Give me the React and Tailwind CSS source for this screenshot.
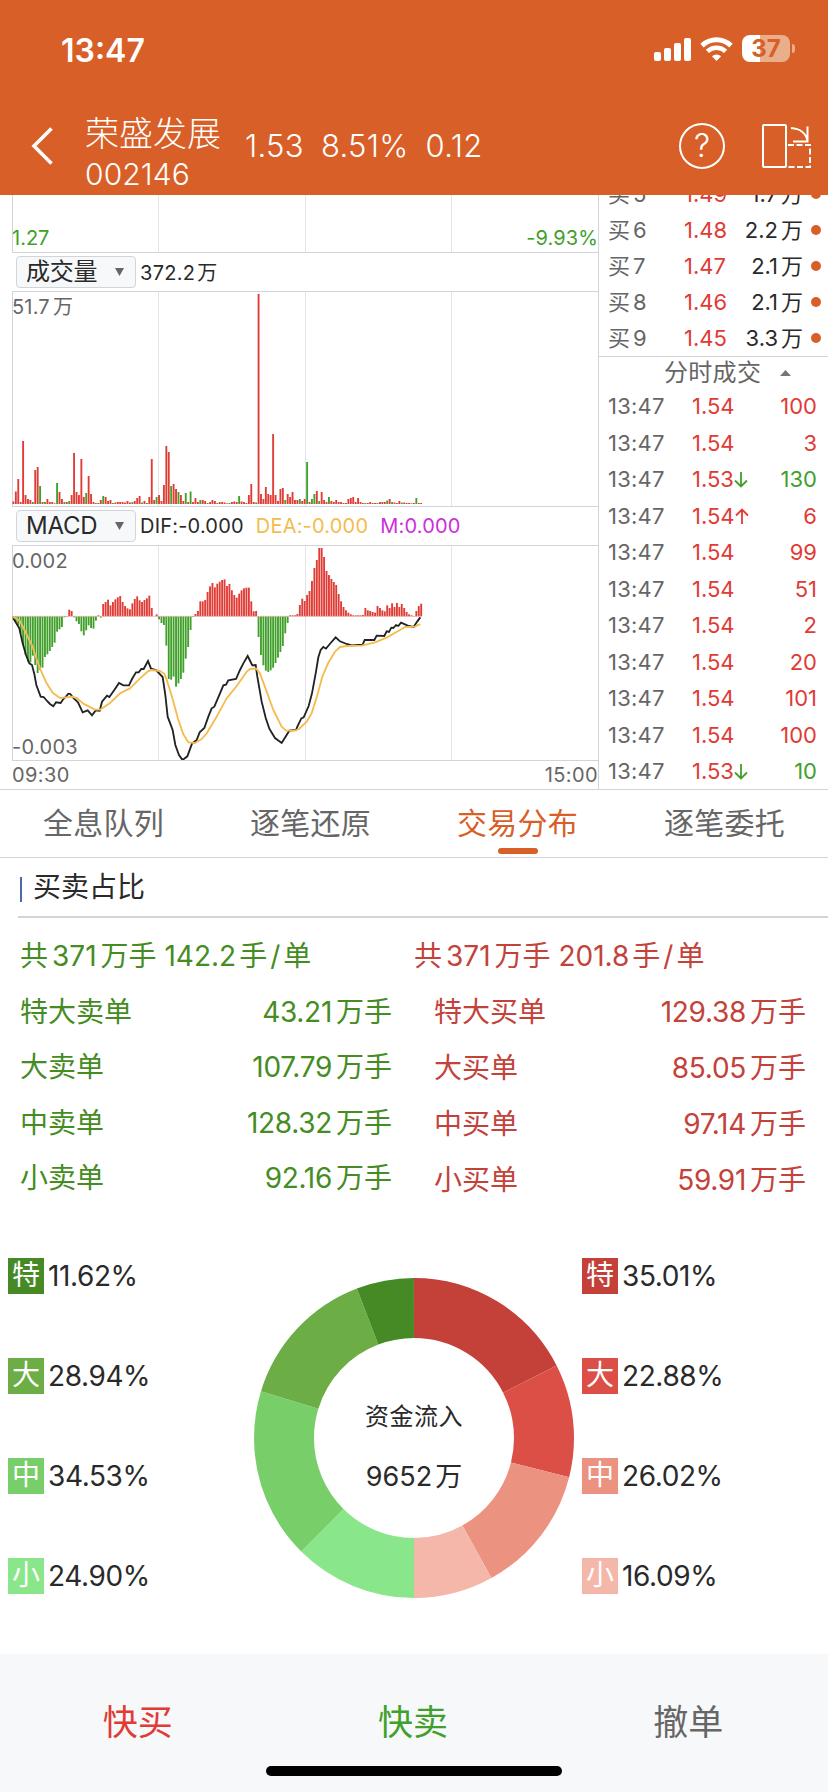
import React from "react";

const volume = [
  2.5, 12.5, 25, 2, 63, 9, 5, 4, -2, 34, 37, -18, 2, -2, 5, 2, 2, 0.7, -21, 12,
  5, -2, 2, -3, 9, 51, 12, 9, 45, 7, -11, 28, 10, 2, -1, 1, 4, -8, 7, 3,
  4, -1, 1.5, 2, 2, 2, 1.5, 3, 1.5, -2, 3, 6, 8, -1.5, 3, -1, 7, 45, 4, -7,
  9, 3, 19, 58, 52, -18, 20, 15, -12, 9, 3, -11, 2, -12.5, 2, 6, 2, -4, 4, 3,
  -1, 2, 4, 3, -1, 2, 2, 1.5, 0.7, -1, 2, 2.5, 2, -8, 2.5, 2, 1, 9, 20, 2,
  -1.5, 210, 10, 5, 17, 10, 9, 70, 9, 3, 15, 16, -4, 10, 7, 12, 4, 4, -5, 3,
  5, -42, 2, -5, -10, 13, -3, 12, 4, 2, -7, 3, 2, 4, 2, 2, 1, 1, 5, 6,
  7, 2, 6, 2, 1, -1, 1, 2, 1, 1, -1, 2, 2, 2, -3.5, 5, -2, 1.5, 1, 3,
  -1.5, 1.5, 1, 1, 0.7, 1, -6, 1, 1,
];

const macd = [
  -6, -16, -26, -51, -86, -116, -136, -138, -118, -146, -170, -161, -154, -122,
  -114, -104, -92, -79, -46, -39, -32, -3, -2, 20, 16, -3, -15, -23, -45, -57,
  -42, -27, -35, -37, -13, 3, -4, 37, 43, 50, 33, 43, 51, 57, 61, 43, 31, 24,
  21, 39, 52, 60, 48, 43, 49, 54, 62, 25, 0, 6, -9, -20, -26, -88, -188, -190,
  -181, -211, -201, -188, -169, -127, -92, -41, -2, 7, 16, 45, 45, 49, 73, 90,
  100, 87, 98, 104, 109, 111, 91, 97, 78, 64, 56, 68, 78, 84, 86, 86, 45, 15,
  16, -62, -116, -147, -163, -167, -162, -154, -140, -124, -107, -89, -51, -20,
  3, 3, 3, 7, 34, 53, 46, 64, 76, 106, 145, 169, 205, 205, 178, 136, 124, 112,
  103, 94, 67, 45, 28, 18, 11, 6, 3, 3, 3, 3, 4, 25, 18, 16, 13, 11, 31, 25,
  18, 15, 33, 25, 39, 28, 40, 28, 37, 25, 13, 6, 3, -1, 16, 31, 38,
];

const dif =
  "40,355 58,385 68,430 78,465 88,490 96,495 103,522 109,555 122,590 131,591 141,603 150,612 160,619 168,607 182,609 190,597 198,590 205,581 211,582 220,594 234,607 248,637 263,631 276,646 287,631 299,632 306,605 321,587 328,591 343,570 357,549 370,556 387,556 396,537 408,517 416,517 424,507 431,507 444,483 453,506 468,510 488,531 496,585 503,650 518,690 526,735 537,765 546,778 552,777 562,769 576,731 590,720 599,697 613,684 625,650 635,625 643,620 660,580 670,556 678,554 685,541 708,537 720,510 730,490 743,468 752,486 757,496 767,495 772,530 785,605 797,653 808,686 825,714 845,729 868,692 888,690 892,680 904,655 911,652 926,618 936,580 948,515 955,472 962,450 970,441 978,446 992,429 1007,412 1020,424 1040,432 1055,436 1088,434 1094,420 1123,420 1130,407 1153,408 1160,394 1167,396 1174,383 1180,384 1188,375 1195,378 1203,368 1215,373 1226,378 1241,381 1252,364 1261,352";

const dea =
  "40,350 60,363 75,393 98,441 110,478 125,517 140,550 158,578 180,594 198,592 215,590 230,594 250,611 285,629 300,629 330,609 360,580 390,565 420,535 445,513 455,510 480,513 493,521 502,545 518,597 535,660 550,703 565,727 585,729 605,717 620,700 650,650 680,595 710,558 740,515 750,507 768,505 780,520 800,575 820,630 845,680 858,692 885,692 897,687 920,665 935,640 952,585 967,530 985,488 1005,455 1020,441 1040,438 1085,437 1125,427 1160,413 1200,390 1215,381 1245,380 1261,372";

const bids = [
  ["买5", "1.49", "1.7"],
  ["买6", "1.48", "2.2"],
  ["买7", "1.47", "2.1"],
  ["买8", "1.46", "2.1"],
  ["买9", "1.45", "3.3"],
];

const ticks = [
  ["1.54", "", "100"],
  ["1.54", "", "3"],
  ["1.53", "down", "130"],
  ["1.54", "up", "6"],
  ["1.54", "", "99"],
  ["1.54", "", "51"],
  ["1.54", "", "2"],
  ["1.54", "", "20"],
  ["1.54", "", "101"],
  ["1.54", "", "100"],
  ["1.53", "down", "10"],
];

const sells = [
  ["特大卖单", "43.21"],
  ["大卖单", "107.79"],
  ["中卖单", "128.32"],
  ["小卖单", "92.16"],
];

const buys = [
  ["特大买单", "129.38"],
  ["大买单", "85.05"],
  ["中买单", "97.14"],
  ["小买单", "59.91"],
];

const sellShare = [
  { label: "特", value: 11.62, bg: "bg-[#468a26]", color: "#468a26" },
  { label: "大", value: 28.94, bg: "bg-[#6cad45]", color: "#6cad45" },
  { label: "中", value: 34.53, bg: "bg-[#78cf69]", color: "#78cf69" },
  { label: "小", value: 24.9, bg: "bg-[#89e68a]", color: "#89e68a" },
];

const buyShare = [
  { label: "特", value: 35.01, bg: "bg-[#c34139]", color: "#c34139" },
  { label: "大", value: 22.88, bg: "bg-[#dc4f47]", color: "#dc4f47" },
  { label: "中", value: 26.02, bg: "bg-[#ec9280]", color: "#ec9280" },
  { label: "小", value: 16.09, bg: "bg-[#f4b7a9]", color: "#f4b7a9" },
];

function StatusBar() {
  return (
    <div className="flex h-[99px] items-end justify-between pl-[61px] pr-[33px] text-white">
      <span className="h-[68px] text-[32px] leading-[40px] font-semibold">13:47</span>
      <div className="flex h-[64px] items-start">
        <svg className="mt-[3px] h-[24px] w-[38px]" viewBox="0 0 38 24" fill="currentColor">
          <rect x="0" y="14" width="7" height="9" rx="2" />
          <rect x="10" y="10" width="7" height="13" rx="2" />
          <rect x="20" y="5" width="7" height="18" rx="2" />
          <rect x="30" y="0" width="7" height="23" rx="2" />
        </svg>
        <svg className="mt-[2px] ml-[8px] h-[25px] w-[33px]" viewBox="0 0 33 25" fill="none" stroke="currentColor">
          <path d="M2 8.6a21 21 0 0 1 29 0" strokeWidth="5" />
          <path d="M7.4 14.4a13.2 13.2 0 0 1 18.2 0" strokeWidth="4.6" />
          <path d="M16.5 24l-4.6-4.8a6.8 6.8 0 0 1 9.2 0z" fill="currentColor" stroke="none" />
        </svg>
        <div className="ml-[9px] flex items-center">
          <div className="flex h-[27px] w-[48px] items-center justify-center rounded-lg bg-linear-to-r from-white from-[37.5%] to-[#e9ae8a] to-[37.5%] text-[24px] leading-[30px] font-bold text-[#d85f28]">
            37
          </div>
          <div className="ml-[2px] h-[9px] w-[3px] rounded-r-full bg-[#e9ae8a]" />
        </div>
      </div>
    </div>
  );
}

function Header() {
  return (
    <header className="h-[195px] bg-[#d85f28] text-white">
      <StatusBar />
      <div className="flex h-[94px] items-center pl-[30px] pr-[17px]">
        <svg className="h-[38px] w-[24px]" viewBox="0 0 24 38" fill="none" stroke="currentColor" strokeWidth="3.6">
          <path d="M21.5 1.5L4 19l17.5 17.5" />
        </svg>
        <div className="ml-[31px] flex w-[160px] flex-col pt-[8px]">
          <span className="text-[34px] leading-[48px] font-light">荣盛发展</span>
          <span className="text-[30px] leading-[32px] font-light tracking-[0.1px]">002146</span>
        </div>
        <div className="flex gap-[17px] text-[31px] font-light tracking-[0.3px]">
          <span>1.53</span>
          <span>8.51%</span>
          <span>0.12</span>
        </div>
        <div className="ml-auto flex h-[46px] w-[46px] items-center justify-center rounded-full border-2 border-white text-[32px] leading-none font-light">
          ?
        </div>
        <svg className="ml-[36px] h-[46px] w-[50px]" viewBox="0 0 50 46" fill="none" stroke="currentColor" strokeWidth="2">
          <rect x="2" y="2" width="23" height="42" rx="1" />
          <path d="M27 22H49V44H26" strokeDasharray="6 2.5" />
          <path d="M30 5c8 .5 15 4.500 16.500 13M46.500 3.500v15H32" />
        </svg>
      </div>
    </header>
  );
}

function GridLines() {
  return (
    <div className="absolute inset-0 flex">
      <div className="w-[146px] border-r border-[#e3e3ea]" />
      <div className="w-[147px] border-r border-[#e3e3ea]" />
      <div className="w-[146px] border-r border-[#e3e3ea]" />
    </div>
  );
}

function Picker({ children }) {
  return (
    <button className="flex h-[32px] w-[120px] shrink-0 items-center justify-between rounded border border-[#d3d4da] bg-[#f7f8fa] pr-[11px] pl-[9px] text-[24px] leading-[30px] tracking-[-0.2px] text-[#2a2a2a]">
      <span>{children}</span>
      <svg className="h-[8px] w-[9px]" viewBox="0 0 9 8" fill="#666">
        <path d="M0 0h9L4.500 8z" />
      </svg>
    </button>
  );
}

function Bars({ data, baseline, scale }) {
  return data.map((v, i) => (
    <rect
      key={i}
      x={37.4 + i * 7.282}
      y={v > 0 || scale === 3 ? baseline - Math.abs(v) * scale : baseline}
      width="5.600"
      height={Math.abs(v) * scale}
      fill={v > 0 ? "#e03b34" : "#41a02b"}
    />
  ));
}

function Charts() {
  return (
    <div className="w-[599px] border-r border-[#d3d4da] pl-[12px] text-[20px] text-[#666]">
      <div className="relative h-[58px] border-b border-l border-[#d3d4da] text-[#41a02b]">
        <GridLines />
        <div className="-ml-px flex items-end justify-between pt-[28px] leading-[30px]">
          <span>1.27</span>
          <span className="tracking-[0.1px]">-9.93%</span>
        </div>
      </div>
      <div className="flex h-[39px] items-center gap-[4px] border-b border-[#d3d4da] pl-[4px] text-[#2a2a2a]">
        <Picker>成交量</Picker>
        <span className="pt-px tracking-[0.3px]">372.2<span className="ml-[2px]">万</span></span>
      </div>
      <div className="relative h-[215px] border-b border-l border-[#d3d4da]">
        <GridLines />
        <span className="absolute top-0 -left-px leading-[31px] tracking-[0.2px]">51.7<span className="ml-[3px]">万</span></span>
        <svg className="absolute top-0 -left-px h-[214px] w-[588px]" viewBox="36 306 1764 642">
          <Bars data={volume} baseline={942} scale={3} />
        </svg>
      </div>
      <div className="flex h-[39px] items-center border-b border-[#d3d4da] pl-[4px] tracking-[0.2px] text-[#2a2a2a]">
        <Picker>MACD</Picker>
        <span className="ml-[4px]">DIF:-0.000</span>
        <span className="ml-[12px] text-[#f4bc4e]">DEA:-0.000</span>
        <span className="ml-[12px] text-[#cb2edb]">M:0.000</span>
      </div>
      <div className="relative h-[215px] border-b border-l border-[#d3d4da]">
        <GridLines />
        <span className="absolute top-0 -left-px leading-[31px] tracking-[0.2px]">0.002</span>
        <span className="absolute bottom-0 -left-px leading-[26px] tracking-[0.3px]">-0.003</span>
        <svg className="absolute top-0 -left-px h-[214px] w-[588px]" viewBox="36 138 1764 642" fill="none">
          <Bars data={macd} baseline={349} scale={1} />
          <path d="M40 349H1266" stroke="#e7a9a4" strokeWidth="2" />
          <polyline points={dif} stroke="#222" strokeWidth="5.500" />
          <polyline points={dea} stroke="#f4bc4e" strokeWidth="5.500" strokeLinejoin="round" />
        </svg>
      </div>
      <div className="flex justify-between leading-[29px] tracking-[0.4px]">
        <span>09:30</span>
        <span>15:00</span>
      </div>
    </div>
  );
}

function OrderBook() {
  return (
    <div className="flex-1 text-[22px] text-[#666]">
      <div className="flex h-[162px] flex-col justify-end overflow-hidden border-b border-[#d3d4da]">
        {bids.map(([name, price, amount]) => (
          <div key={name} className="flex h-[36px] shrink-0 items-center pr-[7px] pl-[9px]">
            <span className="w-[76px]">{name[0]}<span className="ml-[3px]">{name[1]}</span></span>
            <span className="text-[#e03b34]">{price}</span>
            <span className="ml-auto text-[#2a2a2a]">{amount}<span className="ml-[3px]">万</span></span>
            <span className="ml-[8px] h-[10px] w-[10px] rounded-full bg-[#d85f28]" />
          </div>
        ))}
      </div>
      <div className="flex h-[31px] items-center pl-[65px] text-[24px] leading-[31px] tracking-[0.3px]">
        分时成交
        <svg className="ml-[19px] h-[6px] w-[11px]" viewBox="0 0 11 6" fill="#777">
          <path d="M0 6L5.500 0 11 6z" />
        </svg>
      </div>
      {ticks.map(([price, dir, amount], i) => (
        <div key={i} className="flex h-[36.5px] items-center pt-px pr-[11px] pl-[9px]">
          <span className="w-[84px] tracking-[0.2px]">13:47</span>
          <span className="text-[#e03b34]">{price}</span>
          {dir && (
            <svg
              className={dir === "up" ? "h-[16px] w-[14px] text-[#e03b34]" : "h-[16px] w-[14px] rotate-180 text-[#41a02b]"}
              viewBox="0 0 14 16"
              fill="none"
              stroke="currentColor"
              strokeWidth="1.800"
            >
              <path d="M7 16V1.500M1 7.500l6-6 6 6" />
            </svg>
          )}
          <span className={dir === "down" ? "ml-auto text-[#41a02b]" : "ml-auto text-[#e03b34]"}>{amount}</span>
        </div>
      ))}
    </div>
  );
}

function Tabs() {
  const tabs = ["全息队列", "逐笔还原", "交易分布", "逐笔委托"];
  return (
    <nav className="flex h-[69px] border-y border-[#d3d4da] text-[30px] tracking-[0.2px] text-[#666]">
      {tabs.map((tab) => (
        <div
          key={tab}
          className={
            tab === "交易分布"
              ? "relative flex-1 text-center leading-[67px] text-[#d85f28]"
              : "flex-1 text-center leading-[67px]"
          }
        >
          {tab}
          {tab === "交易分布" && (
            <span className="absolute bottom-[3px] left-1/2 h-[6px] w-[40px] -translate-x-1/2 rounded-[3px] bg-[#d85f28]" />
          )}
        </div>
      ))}
    </nav>
  );
}

function OrderStats({ average, rows, className, rowClass }) {
  return (
    <div className={className}>
      <div className="h-[56px] leading-[56px]">
        共<span className="mx-[4px]">371</span>万手 {average}<span className="ml-[3px]">手</span>
        <span className="mx-[3px]">/</span>单
      </div>
      {rows.map(([label, value]) => (
        <div key={label} className={rowClass}>
          <span>{label}</span>
          <span className="tracking-[-0.3px]">{value}<span className="ml-[4px] tracking-normal">万手</span></span>
        </div>
      ))}
    </div>
  );
}

function Legend({ items, className }) {
  return (
    <div className={className}>
      {items.map((item) => (
        <div key={item.label} className="flex h-[36px] items-center gap-[4px]">
          <span className={`h-[36px] w-[36px] text-center text-[28px] leading-[35px] text-white ${item.bg}`}>
            {item.label}
          </span>
          <span className="text-[28px] tracking-[-0.4px] text-[#2a2a2a]">{item.value.toFixed(2)}%</span>
        </div>
      ))}
    </div>
  );
}

function Donut() {
  let start = 0;
  // clockwise from the top: buys on the right half, sells back up the left
  const slices = [...buyShare, ...[...sellShare].reverse()].map((s) => {
    const slice = { ...s, start };
    start += s.value;
    return slice;
  });

  return (
    <div className="relative h-[320px] w-[320px]">
      <svg className="h-full w-full -rotate-90" viewBox="0 0 320 320" fill="none">
        {slices.map((s) => (
          <circle
            key={s.color}
            cx="160"
            cy="160"
            r="130"
            stroke={s.color}
            strokeWidth="60"
            pathLength="200"
            strokeDasharray={`${s.value} ${200 - s.value}`}
            strokeDashoffset={-s.start}
          />
        ))}
      </svg>
      <div className="absolute inset-0 flex flex-col items-center pt-[109px] text-[#2a2a2a]">
        <span className="text-[24px] leading-[60px] tracking-[0.5px]">资金流入</span>
        <span className="text-[27px] leading-[60px]">9652<span className="ml-[3px]">万</span></span>
      </div>
    </div>
  );
}

function BottomBar() {
  return (
    <footer className="h-[138px] bg-[#f7f8fa] text-[35px]">
      <div className="flex h-[112px] pt-[32px] pr-[2px] text-center leading-[72px]">
        <span className="flex-1 text-[#e03b34]">快买</span>
        <span className="flex-1 text-[#41a02b]">快卖</span>
        <span className="flex-1 text-[#666]">撤单</span>
      </div>
      <div className="mx-auto h-[10px] w-[296px] rounded-full bg-black" />
    </footer>
  );
}

export default function App() {
  return (
    <div className="flex h-[1792px] w-[828px] flex-col overflow-hidden bg-white font-['Inter','Noto_Sans_CJK_SC',sans-serif]">
      <Header />
      <section className="flex h-[594px]">
        <Charts />
        <OrderBook />
      </section>
      <Tabs />

      {/* Buy / sell ratio */}
      <section className="ml-[18px] flex h-[60px] items-center border-b-2 border-[#d3d4da] pl-[2px] text-[28px] text-[#2a2a2a]">
        <span className="mt-[4px] h-[25px] w-[2px] bg-[#4b69a9]" />
        <span className="ml-[11px]">买卖占比</span>
      </section>
      <section className="flex h-[340px] pt-[10px] text-[28px]">
        <OrderStats
          average="142.2"
          rows={sells}
          className="w-[414px] pr-[22px] pl-[20px] text-[#458c23]"
          rowClass="flex h-[55.5px] items-center justify-between"
        />
        <OrderStats
          average="201.8"
          rows={buys}
          className="w-[414px] pr-[22px] text-[#c3423a]"
          rowClass="flex h-[56px] items-center justify-between pl-[20px]"
        />
      </section>
      <section className="flex flex-1 items-start">
        <Legend items={sellShare} className="flex w-[254px] flex-col gap-[64px] pl-[8px]" />
        <div className="pt-[20px]">
          <Donut />
        </div>
        <Legend items={buyShare} className="flex flex-col gap-[64px] pl-[8px]" />
      </section>
      <BottomBar />
    </div>
  );
}
